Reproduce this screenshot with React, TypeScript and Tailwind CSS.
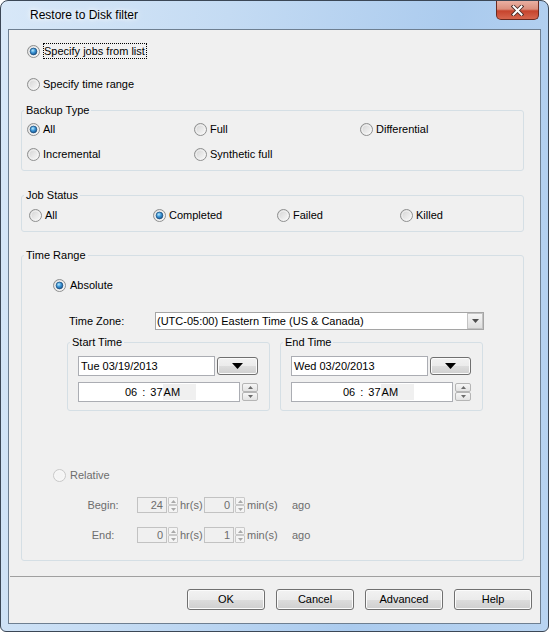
import React from "react";

// Windows 7 style "Restore to Disk filter" dialog

const Radio = ({ checked = false, disabled = false }: { checked?: boolean; disabled?: boolean }) => (
  <svg width="13" height="13" viewBox="0 0 13 13" className="shrink-0">
    <defs>
      <linearGradient id="radio-bg" x1="0" y1="0" x2="1" y2="1">
        <stop offset="0" stopColor="#d0d0d0" />
        <stop offset="1" stopColor="#fdfdfd" />
      </linearGradient>
      <radialGradient id="radio-dot" cx="0.4" cy="0.35" r="0.75">
        <stop offset="0" stopColor="#b9ecff" />
        <stop offset="0.45" stopColor="#3a94d6" />
        <stop offset="1" stopColor="#12477d" />
      </radialGradient>
    </defs>
    <circle
      cx="6.5"
      cy="6.5"
      r="6"
      fill={disabled ? "#f4f4f4" : "url(#radio-bg)"}
      stroke={disabled ? "#c8c8c8" : "#8e8f8f"}
    />
    <circle cx="6.5" cy="6.5" r="4.5" fill="none" stroke={disabled ? "#f7f7f7" : "#f4f4f4"} strokeWidth="0.8" />
    {checked && <circle cx="6.5" cy="6.5" r="3.4" fill="url(#radio-dot)" stroke="#1c4e7d" strokeWidth="0.7" />}
  </svg>
);

const Option = ({ label, checked, disabled }: { label: string; checked?: boolean; disabled?: boolean }) => (
  <div className="flex items-center h-[14px] gap-[3px]">
    <Radio checked={checked} disabled={disabled} />
    <span className={disabled ? "text-[#6d6d6d]" : ""}>{label}</span>
  </div>
);

const Group = ({ title, className, children }: { title: string; className?: string; children: React.ReactNode }) => (
  <fieldset className={"border border-[#d5dfe5] rounded-[3px] " + (className ?? "")}>
    <legend className="ml-[2px] px-[2px] leading-[13px]">{title}</legend>
    {children}
  </fieldset>
);

const Tri = ({ up = false, color = "#000", w = 9, h = 5 }: { up?: boolean; color?: string; w?: number; h?: number }) => (
  <svg width={w} height={h} viewBox={`0 0 ${w} ${h}`}>
    <polygon points={up ? `0,${h} ${w},${h} ${w / 2},0` : `0,0 ${w},0 ${w / 2},${h}`} fill={color} />
  </svg>
);

const Spin = ({ disabled = false }: { disabled?: boolean }) => {
  const half = disabled
    ? "flex-1 flex items-center justify-center border border-[#c9c9c9] bg-[#f4f4f4] rounded-[1px]"
    : "flex-1 flex items-center justify-center border border-[#b5b5b5] rounded-[2px] bg-[linear-gradient(to_bottom,#f6f6f6,#e3e3e3)]";
  const c = disabled ? "#a8a8a8" : "#6b6b6b";
  return (
    <div className={"flex flex-col " + (disabled ? "w-[10px] h-[16px]" : "w-[16px] h-[18px]")}>
      <div className={half}>
        <Tri up color={c} w={5} h={3} />
      </div>
      <div className={half}>
        <Tri color={c} w={5} h={3} />
      </div>
    </div>
  );
};

const DropButton = () => (
  <div className="w-[41px] h-[18px] flex items-center justify-center rounded-[3px] border border-[#707070] bg-[linear-gradient(to_bottom,#f2f2f2_0%,#ebebeb_50%,#dddddd_51%,#cfcfcf_100%)] shadow-[inset_0_0_0_1px_#fbfbfb]">
    <Tri w={11} h={6} />
  </div>
);

const DateTime = ({ title, date, pad }: { title: string; date: string; pad: string }) => (
  <Group title={title} className="w-[203px] h-[75px]">
    <div className="pl-[10px] pt-[7px] flex flex-col">
      <div className="flex items-center gap-[2px] h-[20px]">
        <div className="w-[137px] h-[20px] border border-[#abadb3] bg-white flex items-center pl-[2px]">{date}</div>
        <DropButton />
      </div>
      <div className="mt-[6px] flex items-center gap-[2px] h-[20px]">
        <div className={"w-[162px] h-[20px] border border-[#abadb3] bg-white flex items-center " + pad}>
          <span>06</span>
          <span className="mx-[5px]">:</span>
          <span>37</span>
          <span className="h-[16px] w-[33px] pl-[1px] bg-[#f0f0f0] flex items-center">AM</span>
        </div>
        <Spin />
      </div>
    </div>
  </Group>
);

const NumBox = ({ value }: { value: string }) => (
  <div className="w-[30px] h-[16px] border border-[#c2c2c2] bg-[#f0f0f0] flex items-center justify-end pr-[3px] text-[#6d6d6d]">
    {value}
  </div>
);

const RelRow = ({ label, hr, min, className }: { label: string; hr: string; min: string; className: string }) => (
  <div className={"flex items-center h-[16px] ml-[58px] text-[#6d6d6d] " + className}>
    <span className="w-[46px] text-center">{label}</span>
    <div className="ml-[11px] flex items-center">
      <NumBox value={hr} />
      <div className="ml-[1px]">
        <Spin disabled />
      </div>
    </div>
    <span className="ml-[2px] w-[24px]">hr(s)</span>
    <NumBox value={min} />
    <div className="ml-[1px]">
      <Spin disabled />
    </div>
    <span className="ml-[2px] w-[45px]">min(s)</span>
    <span>ago</span>
  </div>
);

const Btn = ({ children }: { children: React.ReactNode }) => (
  <div className="w-[78px] h-[21px] flex items-center justify-center rounded-[3px] border border-[#707070] bg-[linear-gradient(to_bottom,#f2f2f2_0%,#ebebeb_50%,#dddddd_51%,#cfcfcf_100%)] shadow-[inset_0_0_0_1px_#fbfbfb]">
    {children}
  </div>
);

export default function App() {
  return (
    <div className="w-[549px] h-[632px] bg-white font-['Liberation_Sans',Arial,sans-serif] text-[11px] text-black">
      <div className="w-[549px] h-[632px] flex flex-col rounded-t-[8px] rounded-b-[6px] border border-[#3b4756] bg-[linear-gradient(100deg,#d8e8f8_0%,#c4dbf3_35%,#abcbee_70%,#b9d4f1_100%)] px-[7px] pb-[7px]">
        {/* title bar */}
        <div className="h-[28px] flex items-start">
          <div className="h-[27px] flex items-center pl-[22px] text-[12px] [text-shadow:0_0_8px_#ffffff,0_0_4px_#ffffff]">
            Restore to Disk filter
          </div>
          <div className="ml-auto mr-[2px] w-[43px] h-[19px] flex items-center justify-center rounded-b-[5px] border border-t-0 border-[#6a2a20] bg-[linear-gradient(to_bottom,#eab0a2_0%,#db8f7d_45%,#c6442d_55%,#d6664e_100%)]">
            <svg width="13" height="11" viewBox="0 0 13 11">
              <path d="M2.5 1.5 L10.5 9.5 M10.5 1.5 L2.5 9.5" stroke="#4a2c28" strokeWidth="3.8" strokeLinecap="square" />
              <path d="M2.5 1.5 L10.5 9.5 M10.5 1.5 L2.5 9.5" stroke="#ffffff" strokeWidth="2" strokeLinecap="square" />
            </svg>
          </div>
        </div>

        {/* client area */}
        <div className="h-[595px] border border-[#6e7f91] bg-[#f0f0f0] flex flex-col">
          <div className="mt-[13px] ml-[18px] flex items-center h-[16px] gap-[3px]">
            <Radio checked />
            <span className="border border-dotted border-black h-[16px] leading-[14px] pr-[1px]">Specify jobs from list</span>
          </div>
          <div className="mt-[18px] ml-[18px]">
            <Option label="Specify time range" />
          </div>

          <Group title="Backup Type" className="mt-[13px] ml-[12px] w-[503px] h-[67px]">
            <div className="pl-[5px] grid grid-cols-[167px_166px_1fr]">
              <div className="h-[25px] flex items-center"><Option label="All" checked /></div>
              <div className="h-[25px] flex items-center"><Option label="Full" /></div>
              <div className="h-[25px] flex items-center"><Option label="Differential" /></div>
              <div className="h-[25px] flex items-center"><Option label="Incremental" /></div>
              <div className="h-[25px] flex items-center"><Option label="Synthetic full" /></div>
            </div>
          </Group>

          <Group title="Job Status" className="mt-[18px] ml-[12px] w-[503px] h-[43px]">
            <div className="pl-[7px] grid grid-cols-[124px_124px_123px_1fr]">
              <div className="h-[26px] flex items-center"><Option label="All" /></div>
              <div className="h-[26px] flex items-center"><Option label="Completed" checked /></div>
              <div className="h-[26px] flex items-center"><Option label="Failed" /></div>
              <div className="h-[26px] flex items-center"><Option label="Killed" /></div>
            </div>
          </Group>

          <Group title="Time Range" className="mt-[17px] ml-[12px] w-[503px] h-[312px]">
            <div className="flex flex-col">
              <div className="mt-[16px] ml-[31px] flex items-center h-[14px] gap-[4px]">
                <Radio checked />
                <span>Absolute</span>
              </div>

              <div className="mt-[20px] ml-[47px] flex items-center h-[18px]">
                <span className="w-[86px]">Time Zone:</span>
                <div className="w-[329px] h-[18px] border border-[#a5a5a5] bg-white flex items-center">
                  <span className="flex-1 pl-[1px]">(UTC-05:00) Eastern Time (US &amp; Canada)</span>
                  <div className="w-[16px] h-[16px] border border-[#c3c3c3] bg-[linear-gradient(to_bottom,#f5f5f5,#dedede)] flex items-center justify-center">
                    <Tri color="#4d4d4d" w={7} h={4} />
                  </div>
                </div>
              </div>

              <div className="mt-[6px] ml-[45px] flex gap-[10px]">
                <DateTime title="Start Time" date="Tue 03/19/2013" pad="pl-[46px]" />
                <DateTime title="End Time" date="Wed 03/20/2013" pad="pl-[51px]" />
              </div>

              <div className="mt-[57px] ml-[31px] flex items-center h-[14px] gap-[4px]">
                <Radio disabled />
                <span className="text-[#6d6d6d]">Relative</span>
              </div>

              <RelRow label="Begin:" hr="24" min="0" className="mt-[15px]" />
              <RelRow label="End:" hr="0" min="1" className="mt-[14px]" />
            </div>
          </Group>

          <div className="mt-[15px] ml-[1px] h-[1px] bg-[#a0a0a0]" />

          <div className="mt-[12px] pr-[8px] flex justify-end gap-[11px]">
            <Btn>OK</Btn>
            <Btn>Cancel</Btn>
            <Btn>Advanced</Btn>
            <Btn>Help</Btn>
          </div>
        </div>
      </div>
    </div>
  );
}
